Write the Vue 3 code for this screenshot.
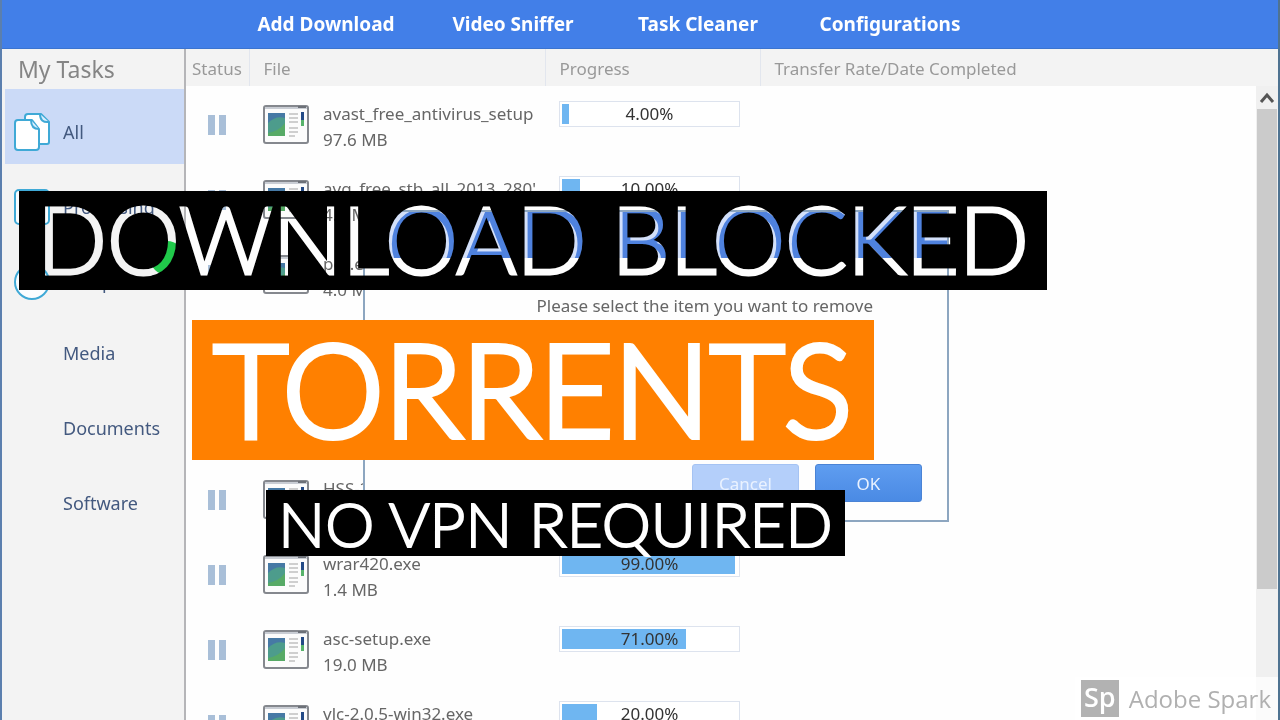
<script setup>
const actions = ['Add Download', 'Video Sniffer', 'Task Cleaner', 'Configurations']

const categories = [
  { name: 'All', icon: 'files', selected: true },
  { name: 'Processing', icon: 'box' },
  { name: 'Completed', icon: 'check', badge: true },
  { name: 'Media' },
  { name: 'Documents' },
  { name: 'Software' }
]

const tasks = [
  { id: 1, file: 'avast_free_antivirus_setup', size: '97.6 MB', progress: 4 },
  { id: 2, file: "avg_free_stb_all_2013_280'", size: '4.2 MB', progress: 10 },
  { id: 3, file: 'pcs.exe', size: '4.0 MB', progress: 35 },
  { id: 4, progress: 0 },
  { id: 5, progress: 0 },
  { id: 6, file: 'HSS-2.exe', size: '6.1 MB', progress: 50 },
  { id: 7, file: 'wrar420.exe', size: '1.4 MB', progress: 99 },
  { id: 8, file: 'asc-setup.exe', size: '19.0 MB', progress: 71 },
  { id: 9, file: 'vlc-2.0.5-win32.exe', size: '22.0 MB', progress: 20 }
]

const headline = 'DOWNLOAD BLOCKED'
</script>

<template>
  <div class="window">
    <nav class="toolbar">
      <button v-for="a in actions" :key="a" type="button">{{ a }}</button>
    </nav>

    <div class="body">
      <aside class="sidebar">
        <h2>My Tasks</h2>
        <a v-for="c in categories" :key="c.name" href="#" :class="{ selected: c.selected, plain: !c.icon }">
          <span class="cat-icon">
            <svg v-if="c.icon === 'files'" width="38" height="40" viewBox="0 0 38 40" fill="#fff" stroke="#3fa9d6" stroke-width="2" stroke-linejoin="round">
              <path d="M14 2h13l8 8v20q0 2-2 2H14q-3 0-3-3V5q0-3 3-3z" />
              <path d="M26 2q0 9 9 8" fill="#d9efff" />
              <path d="M4 8h14l7 9v18q0 3-3 3H4q-3 0-3-3V11q0-3 3-3z" />
              <path d="M17 8q0 9 8 9" fill="#d9efff" />
            </svg>
            <svg v-else-if="c.icon === 'box'" width="38" height="38" viewBox="0 0 38 38" fill="#fbfdff" stroke="#3fa9d6" stroke-width="2">
              <rect x="1" y="2" width="34" height="34" rx="4" />
            </svg>
            <svg v-else-if="c.icon === 'check'" width="38" height="38" viewBox="0 0 38 38" fill="#fbfdff" stroke="#3fa9d6" stroke-width="2">
              <circle cx="18" cy="19" r="17" />
              <path d="M11 19l6 6 10-12" fill="none" />
            </svg>
          </span>
          <span>{{ c.name }}</span>
          <i v-if="c.badge" class="badge"></i>
        </a>
      </aside>

      <main class="list">
        <table>
          <colgroup>
            <col class="c-status" /><col class="c-file" /><col class="c-progress" /><col />
          </colgroup>
          <thead>
            <tr>
              <th>Status</th>
              <th>File</th>
              <th>Progress</th>
              <th>Transfer Rate/Date Completed</th>
            </tr>
          </thead>
          <tbody>
            <tr v-for="t in tasks" :key="t.id">
              <td>
                <svg class="pause" width="18" height="20" viewBox="0 0 18 20" fill="#a9bfd8">
                  <rect width="7" height="20" /><rect x="11" width="7" height="20" />
                </svg>
              </td>
              <td>
                <div v-if="t.file" class="file">
                  <svg width="46" height="39" viewBox="0 0 46 39">
                    <rect x="1" y="1" width="44" height="37" rx="2" fill="#fcfcfc" stroke="#85888e" stroke-width="2" />
                    <path d="M2 3h42" stroke="#c9cdd4" stroke-width="2" />
                    <path d="M35 2h8" stroke="#6d7178" stroke-width="2" />
                    <rect x="5" y="8" width="17" height="23" fill="#4679a5" />
                    <path d="M5 18q8-8 17-5v18H5z" fill="#4d9c8c" />
                    <path d="M5 28q11-2 17-10v13H5z" fill="#57aa66" />
                    <path d="M26 9h9M26 13h9M26 17h9M26 23h9M26 27h9M26 31h6" stroke="#cfcfcf" stroke-width="2" />
                    <rect x="38" y="7" width="3" height="8" fill="#244a86" />
                    <rect x="38" y="15" width="3" height="6" fill="#57b36b" />
                  </svg>
                  <div><div>{{ t.file }}</div><div>{{ t.size }}</div></div>
                </div>
              </td>
              <td>
                <div v-if="t.file" class="bar" role="progressbar" :aria-valuenow="t.progress">
                  <div class="fill" :style="{ width: t.progress + '%' }"></div>
                  <span>{{ t.progress.toFixed(2) }}%</span>
                </div>
              </td>
              <td></td>
            </tr>
          </tbody>
        </table>
        <div class="scrollbar">
          <button type="button" aria-label="Scroll up">
            <svg width="16" height="12" viewBox="0 0 16 12" fill="none" stroke="#555" stroke-width="3"><path d="M2 10l6-7 6 7" /></svg>
          </button>
          <div class="thumb"></div>
        </div>
      </main>
    </div>

    <section class="dialog" role="dialog" aria-label="Remove item">
      <div class="titlebar" :data-echo="headline"></div>
      <p>Please select the item you want to remove</p>
      <div class="buttons">
        <button type="button" class="cancel">Cancel</button>
        <button type="button">OK</button>
      </div>
    </section>

    <h1 class="banner first">{{ headline }}</h1>
    <div class="banner second">TORRENTS</div>
    <div class="banner third">NO VPN REQUIRED</div>

    <div class="spark">
      <span class="logo">Sp</span>
      <span>Adobe Spark</span>
    </div>
  </div>
</template>

<style>
body { overflow: hidden; }
</style>

<style scoped>
* { box-sizing: border-box; }
.window {
  position: relative;
  height: 100vh;
  overflow: hidden;
  display: flex;
  flex-direction: column;
  background: #fefefe;
  border-left: 2px solid #5b7fae;
  border-right: 2px solid #4f7391;
  font-family: "Noto Sans", "Open Sans", sans-serif;
  font-size: 17px;
  color: #666;
}
button { font: inherit; border: 0; padding: 0; background: none; color: inherit; }
.toolbar {
  flex: none;
  height: 49px;
  margin: 0 -2px;
  padding-left: 232px;
  display: grid;
  grid-template-columns: 188px 186px 184px 200px;
  background: #427fe8;
  border-bottom: 1px solid #3b74cf;
}
.toolbar button { color: #fff; font-size: 19px; font-weight: 700; line-height: 46px; white-space: nowrap; }
.body { flex: 1; min-height: 0; display: flex; }
.sidebar {
  flex: none;
  width: 184px;
  padding-left: 3px;
  background: #f3f3f3;
  border-right: 2px solid #b5b5b8;
}
.sidebar h2 { margin: 0; padding-left: 13px; height: 40px; line-height: 40px; font-size: 23px; font-weight: 400; color: #858585; }
.sidebar a {
  position: relative;
  display: flex;
  align-items: center;
  gap: 11px;
  height: 75px;
  padding: 10px 0 0 9px;
  font-size: 18px;
  color: #43597f;
  text-decoration: none;
}
.sidebar .plain { padding-top: 2px; }
.sidebar .selected { background: #cbdaf7; }
.cat-icon { width: 38px; display: flex; }
.badge { position: absolute; right: 0; top: 2px; width: 34px; height: 34px; border-radius: 50%; background: #20c94a; }
.list { flex: 1; min-width: 0; position: relative; display: flex; overflow: hidden; background: #fefefe; }
table { flex: 1; width: 100%; align-self: flex-start; table-layout: fixed; border-collapse: collapse; }
.c-status { width: 63px; }
.c-file { width: 296px; }
.c-progress { width: 215px; }
th { height: 37px; padding: 2px 0 0 14px; text-align: left; font-weight: 400; color: #999; background: #f3f3f3; border-right: 1px solid #e2e6ee; }
th:first-child { padding-left: 6px; }
th:last-child { border-right: 0; }
tbody tr { height: 75px; }
td { height: 75px; padding: 15px 0 0 14px; vertical-align: top; }
td:first-child { padding: 29px 0 0 22px; }
.pause, .file svg { display: block; flex: none; }
.file { display: flex; gap: 14px; line-height: 26px; white-space: nowrap; }
.file svg { margin-top: 4px; }
.bar { position: relative; width: 181px; height: 26px; padding: 2px; border: 1px solid #dde3ee; background: #fff; }
.fill { height: 100%; background: #6fb6f1; }
.bar span { position: absolute; inset: 0; line-height: 24px; text-align: center; color: #333; }
.scrollbar { position: absolute; right: 0; top: 37px; bottom: 0; width: 22px; background: #f0f0f0; }
.scrollbar button { display: flex; width: 100%; height: 23px; align-items: center; justify-content: center; }
.thumb { height: 480px; margin: 0 1px; background: #cbcbcb; }
.dialog {
  position: absolute;
  left: 361px;
  top: 210px;
  width: 586px;
  height: 312px;
  display: flex;
  flex-direction: column;
  background: #fefefe;
  border: 2px solid #8da6c0;
}
.titlebar { position: relative; flex: none; height: 46px; overflow: hidden; background: #d3e0fa; }
.titlebar::before {
  content: attr(data-echo);
  position: absolute;
  left: -343px;
  top: -18px;
  width: 1028px;
  font: 300 92px/95px Lato, sans-serif;
  -webkit-text-stroke: 3px #4f82de;
  text-align: center;
  white-space: nowrap;
  color: #4f82de;
}
.dialog p { margin: 34px 74px 0; line-height: 28px; text-align: right; white-space: nowrap; }
.buttons { margin-top: auto; display: flex; justify-content: flex-end; gap: 16px; padding: 0 25px 18px; }
.buttons button { width: 107px; height: 38px; border: 1px solid #4a83d5; border-radius: 3px; background: linear-gradient(#5f9df0, #4a8ae4); color: #eaf2ff; }
.buttons .cancel { border-color: #a5c3f3; background: #b4cffa; }
.banner { position: absolute; margin: 0; font-family: Lato, sans-serif; font-weight: 300; color: #fff; background: #000; white-space: nowrap; text-align: center; }
.first { left: 17px; top: 191px; width: 1028px; height: 99px; font-size: 92px; line-height: 95px; -webkit-text-stroke: 3px #fff; mix-blend-mode: multiply; }
.second { left: 190px; top: 320px; width: 682px; height: 140px; font-size: 128px; line-height: 136px; -webkit-text-stroke: 6px #fff; background: #ff8000; }
.third { left: 264px; top: 490px; width: 579px; height: 66px; font-size: 62px; line-height: 66px; -webkit-text-stroke: 2px #fff; }
.spark {
  position: absolute;
  right: -2px;
  bottom: 0;
  height: 43px;
  padding: 0 9px 0 6px;
  display: flex;
  align-items: center;
  gap: 10px;
  background: rgba(255, 255, 255, 0.7);
  font-family: "Open Sans", sans-serif;
  font-size: 24px;
  color: #b0b0b0;
}
.logo { width: 38px; height: 37px; line-height: 34px; text-align: center; background: #b2b2b2; color: #fff; font-size: 27px; font-weight: 600; }
</style>
